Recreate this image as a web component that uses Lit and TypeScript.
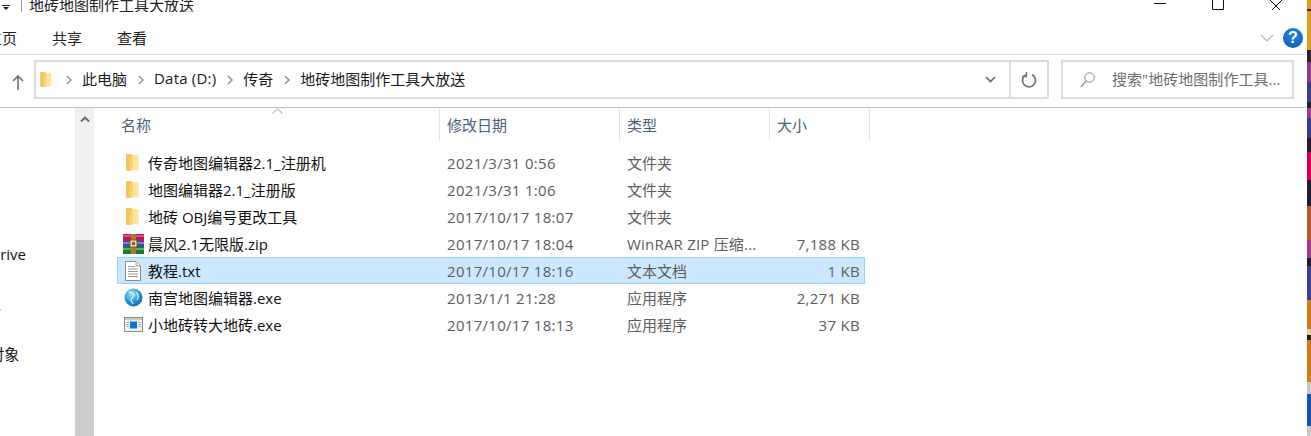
import { LitElement, html, css, svg } from "lit";
import { customElement } from "lit/decorators.js";

type Row = { name: string; date: string; type: string; size: string; icon: string; selected?: boolean };

const ROWS: Row[] = [
  { name: "传奇地图编辑器2.1_注册机", date: "2021/3/31 0:56", type: "文件夹", size: "", icon: "folder" },
  { name: "地图编辑器2.1_注册版", date: "2021/3/31 1:06", type: "文件夹", size: "", icon: "folder" },
  { name: "地砖 OBJ编号更改工具", date: "2017/10/17 18:07", type: "文件夹", size: "", icon: "folder" },
  { name: "晨风2.1无限版.zip", date: "2017/10/17 18:04", type: "WinRAR ZIP 压缩...", size: "7,188 KB", icon: "rar" },
  { name: "教程.txt", date: "2017/10/17 18:16", type: "文本文档", size: "1 KB", icon: "txt", selected: true },
  { name: "南宫地图编辑器.exe", date: "2013/1/1 21:28", type: "应用程序", size: "2,271 KB", icon: "globe" },
  { name: "小地砖转大地砖.exe", date: "2017/10/17 18:13", type: "应用程序", size: "37 KB", icon: "exe" },
];

const folderIcon = (w: number, h: number) => html`<svg width=${w} height=${h} viewBox="0 0 13 19">
  <path d="M0 1h5l1 1v14l-2 2H1l-1-1z" fill="#f2c65c"/>
  <path d="M5 1.500L12.500 2.500V17L4 18z" fill="#fde59c"/>
  <path d="M5 2L6 3V15.500L4 17.500V18" fill="none" stroke="#e9b94e" stroke-width=".8"/>
</svg>`;

const ICONS: Record<string, unknown> = {
  folder: folderIcon(13, 19),
  rar: html`<svg width="21" height="20" viewBox="0 0 21 20">
    <rect x="0" y="0" width="21" height="7" fill="#b21d55"/><rect x="0" y="1" width="21" height="2" fill="#e0517f"/>
    <rect x="0" y="7" width="21" height="6" fill="#3f4aa0"/><rect x="0" y="8" width="21" height="2" fill="#7b84cf"/>
    <rect x="0" y="13" width="21" height="7" fill="#1c7a32"/><rect x="0" y="14" width="21" height="2" fill="#4fb35e"/>
    <rect x="8" y="0" width="5" height="20" fill="#a8793a"/>
    <rect x="7" y="6" width="7" height="7" rx="1" fill="#e8d9b0" stroke="#6b4a1e" stroke-width=".8"/>
    <rect x="9" y="8" width="3" height="3" fill="#8a5a20"/>
  </svg>`,
  txt: html`<svg width="16" height="20" viewBox="0 0 16 20">
    <path d="M.5.500H11L15.500 5V19.500H.5z" fill="#fff" stroke="#8c8c8c"/>
    <path d="M11 .5V5H15.500" fill="#e6e6e6" stroke="#a0a0a0"/>
    <path d="M3 5.500H10M3 8H13M3 10.500H13M3 13H13M3 15.500H13" stroke="#9a9a9a" stroke-width="1"/>
  </svg>`,
  globe: html`<svg width="19" height="19" viewBox="0 0 19 19">
    <defs><radialGradient id="g" cx=".4" cy=".3" r=".8"><stop offset="0" stop-color="#a9e2f5"/><stop offset=".5" stop-color="#2a9fd6"/><stop offset="1" stop-color="#0b5fa5"/></radialGradient></defs>
    <circle cx="9.500" cy="9.500" r="9" fill="url(#g)"/>
    <path d="M5 4c3 0 5 1 5 3s-3 3-3 5 2 2 2 4M12 4c2 2 3 5 1 8" fill="none" stroke="#c4e8f6" stroke-width="1.300"/>
    <path d="M3 9c1 2 2 3 4 3" fill="none" stroke="#7fcbe8" stroke-width="1"/>
  </svg>`,
  exe: html`<svg width="19" height="15" viewBox="0 0 19 15">
    <rect x=".5" y=".5" width="18" height="14" fill="#f4f4f4" stroke="#8a8a8a"/>
    <rect x="1" y="1" width="17" height="2" fill="#c9c9c9"/>
    <rect x="6" y="4.500" width="7" height="7" fill="#0f74d8"/>
    <path d="M2 5.500H5M2 7.500H5M2 9.500H5M14 5.500H17M14 7.500H17M14 9.500H17" stroke="#a8a8a8"/>
  </svg>`,
};

const chevronRight = svg`<path d="M1 1l4 4-4 4" fill="none" stroke="#8a8a8a" stroke-width="1.400"/>`;

const stripBg = `linear-gradient(to bottom,
  #dc9d22 0 9px,#3b2416 9px 11px,#dc9d22 11px 50px,
  #33202c 50px 62px,#8a3c86 62px 82px,#3b3f88 82px 102px,#2a1c34 102px 108px,#a03c90 108px 118px,#3a3d86 118px 138px,#241a2e 138px 152px,
  #d4004f 152px 180px,#221a32 180px 206px,#b8562c 206px 240px,#a03a8c 240px 258px,#211a2a 258px 266px,#3d3f8c 266px 300px,
  #d07a1e 300px 329px,#e0cfa0 329px 335px,#2a1a10 335px 340px,#d07a1e 340px 382px,
  #c9c9c9 382px 394px,#1454b0 394px 426px,#c9c9c9 426px)`;

@customElement("app-root")
export class AppRoot extends LitElement {
  static styles = css`
    :host {
      display: block;
      width: 1311px;
      height: 436px;
      overflow: hidden;
      background: #fff;
      font-family: "Open Sans", "Noto Sans CJK SC", sans-serif;
      font-size: 15px;
      color: #000;
    }
    .root { display: flex; height: 436px; }
    .window { width: 1305px; display: flex; flex-direction: column; margin-right: 2px; }
    .strip { width: 4px; height: 436px; }

    .title { height: 12px; display: flex; align-items: flex-start; overflow: hidden; flex: none; }
    .qa { width: 21px; height: 12px; display: flex; padding: 5px 0 0 2px; box-sizing: border-box; flex: none; }
    .sep { width: 1px; height: 12px; background: #9a9a9a; flex: none; }
    .title-text { margin-left: 7px; line-height: 14px; margin-top: -2px; color: #222; }
    .caption { margin-left: auto; display: flex; align-items: flex-start; padding-right: 23px; gap: 46px; }
    .caption svg { display: block; }

    .tabs { height: 42px; flex: none; display: flex; align-items: center; border-bottom: 1px solid #dadada; color: #222; }
    .tab-list { display: flex; gap: 35px; margin: 10px 0 0 -13px; line-height: 20px; }
    .ribbon-right { margin: 10px 0 0 auto; display: flex; align-items: center; gap: 9px; padding-right: 2px; }
    .help { width: 20px; height: 20px; border-radius: 50%; background: radial-gradient(circle at 50% 30%, #2a86dc, #0859b4); color: #fff; font: bold 16px/20px "Liberation Sans", sans-serif; text-align: center; }

    .nav { height: 53px; flex: none; border-bottom: 1px solid #bdbdbd; display: flex; align-items: flex-start; padding: 5px 11px 0 0; box-sizing: border-box; }
    .up { width: 35px; height: 39px; display: flex; align-items: center; justify-content: center; flex: none; padding-top: 5px; box-sizing: border-box; margin-right: -1px; }
    .address { width: 1015px; height: 39px; border: 2px solid #dcdcdc; box-sizing: border-box; display: flex; align-items: center; flex: none; }
    .crumbs { flex: 1; display: flex; align-items: center; padding-left: 4px; color: #1a1a1a; }
    .crumb-folder { margin-right: 14px; display: flex; }
    .crumb-sep { display: flex; margin-right: 10px; }
    .crumb { margin: 0 11px 3px 0; white-space: nowrap; }
    .crumb.latin { letter-spacing: .2px; }
    .drop { width: 38px; display: flex; justify-content: center; flex: none; }
    .refresh { width: 38px; height: 100%; border-left: 2px solid #dcdcdc; display: flex; align-items: center; justify-content: center; flex: none; box-sizing: border-box; }
    .search { margin-left: 12px; width: 233px; height: 39px; border: 2px solid #dcdcdc; box-sizing: border-box; display: flex; align-items: center; padding-left: 17px; color: #6d6d6d; flex: none; white-space: nowrap; }
    .search svg { margin-right: 17px; flex: none; }
    .search span { margin-bottom: 3px; letter-spacing: .05px; }

    .body { flex: 1; display: flex; min-height: 0; }
    .side { width: 75px; flex: none; overflow: hidden; color: #111; }
    .side-item { white-space: nowrap; line-height: 20px; }
    .side-drive { margin: 136px 0 0 -40px; }
    .side-dot { width: 1px; height: 2px; background: #7fe8f0; margin-top: 45px; }
    .side-obj { margin: 33px 0 0 -34px; }
    .scroll { width: 19px; flex: none; background: #f0f0f0; display: flex; flex-direction: column; }
    .scroll-up { height: 132px; display: flex; justify-content: center; padding-top: 8px; box-sizing: border-box; flex: none; }
    .thumb { flex: 1; background: #cdcdcd; }
    .main { margin-left: 3px; flex: 1; min-width: 0; }

    .head { display: grid; grid-template-columns: 343px 180px 150px 100px; height: 33px; color: #4c607a; position: relative; }
    .head > div { display: flex; align-items: center; border-right: 1px solid #e5e5e5; box-sizing: border-box; padding-left: 7px; }
    .head > div:first-child { padding-left: 24px; }
    .sort { position: absolute; left: 175px; top: 0; display: block; }

    .rows { margin: 8px 0 0 20px; width: 748px; }
    .row { display: grid; grid-template-columns: 322px 180px 150px 96px; height: 27px; align-items: center; box-sizing: border-box; border: 1px solid transparent; color: #5c5c5c; white-space: nowrap; }
    .row.sel { background: #cce8ff; border-color: #99d1ff; }
    .name { display: flex; align-items: center; color: #111; }
    .ico { width: 30px; display: flex; justify-content: center; flex: none; box-sizing: border-box; }
    .ico.folder { padding-right: 2px; }
    .cell { padding-left: 7px; }
    .date, .size { letter-spacing: .3px; }
    .type-latin { letter-spacing: .2px; }
    .size { text-align: right; padding-right: 6px; }
  `;

  render() {
    const sep = html`<svg class="crumb-sep" width="6" height="10" viewBox="0 0 6 10">${chevronRight}</svg>`;
    return html`<div class="root">
      <div class="window">
        <div class="title">
          <div class="qa"><svg width="8" height="5" viewBox="0 0 8 5"><path d="M0 .5H8" stroke="#222"/><path d="M1 2H7L4 5z" fill="#222"/></svg></div>
          <div class="sep"></div>
          <div class="title-text">地砖地图制作工具大放送</div>
          <div class="caption">
            <svg width="12" height="4" viewBox="0 0 12 4"><path d="M0 3.500H12" stroke="#111"/></svg>
            <svg width="12" height="10" viewBox="0 0 12 10"><path d="M.5 0V9.500H11.500V0" fill="none" stroke="#111"/></svg>
            <svg width="12" height="10" viewBox="0 0 12 10"><path d="M0 0L10 10M12 0L2 10" fill="none" stroke="#111"/></svg>
          </div>
        </div>
        <div class="tabs">
          <div class="tab-list"><span>主页</span><span>共享</span><span>查看</span></div>
          <div class="ribbon-right">
            <svg width="14" height="8" viewBox="0 0 14 8"><path d="M1 1l6 6 6-6" fill="none" stroke="#b5b5b5" stroke-width="1.200"/></svg>
            <div class="help">?</div>
          </div>
        </div>
        <div class="nav">
          <div class="up"><svg width="12" height="15" viewBox="0 0 12 15"><path d="M6 15V1M1 6l5-5 5 5" fill="none" stroke="#6e6e6e" stroke-width="1.600"/></svg></div>
          <div class="address">
            <div class="crumbs">
              <span class="crumb-folder">${folderIcon(12, 17)}</span>
              ${sep}
              <span class="crumb">此电脑</span>
              ${sep}
              <span class="crumb latin">Data (D:)</span>
              ${sep}
              <span class="crumb">传奇</span>
              ${sep}
              <span class="crumb">地砖地图制作工具大放送</span>
            </div>
            <div class="drop"><svg width="11" height="7" viewBox="0 0 11 7"><path d="M1 1l4.500 4.500L10 1" fill="none" stroke="#666" stroke-width="1.600"/></svg></div>
            <div class="refresh"><svg width="16" height="16" viewBox="0 0 16 16"><path d="M5 2.600A6.500 6.500 0 1 0 11 2.600" fill="none" stroke="#777" stroke-width="1.800"/><path d="M4.500 0V4.500H0" fill="none" stroke="#777" stroke-width="1.500" transform="translate(1 0)"/></svg></div>
          </div>
          <div class="search">
            <svg width="15" height="16" viewBox="0 0 15 16"><circle cx="9.500" cy="5.500" r="4.700" fill="none" stroke="#8a8a8a"/><path d="M6 9L.8 15" stroke="#b08a60" stroke-width="1.200"/></svg>
            <span>搜索"地砖地图制作工具...</span>
          </div>
        </div>
        <div class="body">
          <div class="side">
            <div class="side-item side-drive">OneDrive</div>
            <div class="side-dot"></div>
            <div class="side-item side-obj">3D 对象</div>
          </div>
          <div class="scroll">
            <div class="scroll-up"><svg width="10" height="6" viewBox="0 0 10 6"><path d="M1 5.500L5 1.500 9 5.500" fill="none" stroke="#606060" stroke-width="1.800"/></svg></div>
            <div class="thumb"></div>
          </div>
          <div class="main">
            <div class="head">
              <div>名称
                <svg class="sort" width="11" height="6" viewBox="0 0 11 6"><path d="M.5 5.500L5.500 1 10.500 5.500" fill="none" stroke="#9a9a9a"/></svg>
              </div>
              <div>修改日期</div>
              <div>类型</div>
              <div>大小</div>
            </div>
            <div class="rows">
              ${ROWS.map(
                (r) => html`<div class="row ${r.selected ? "sel" : ""}">
                  <div class="name"><span class="ico ${r.icon}">${ICONS[r.icon]}</span>${r.name}</div>
                  <div class="cell date">${r.date}</div>
                  <div class="cell ${r.type.startsWith("WinRAR") ? "type-latin" : ""}">${r.type}</div>
                  <div class="size">${r.size}</div>
                </div>`
              )}
            </div>
          </div>
        </div>
      </div>
      <div class="strip" style="background:${stripBg}"></div>
    </div>`;
  }
}
